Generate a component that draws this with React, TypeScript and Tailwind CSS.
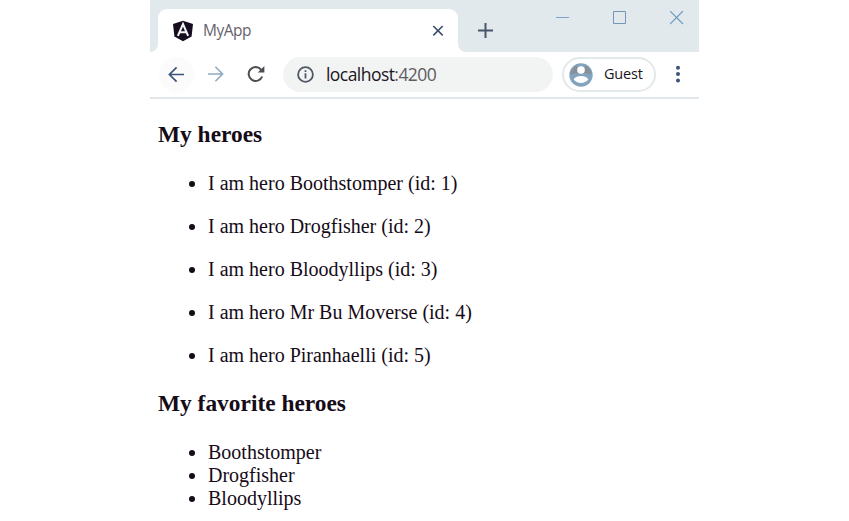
const heroes = ['Boothstomper', 'Drogfisher', 'Bloodyllips', 'Mr Bu Moverse', 'Piranhaelli'];
const favorites = ['Boothstomper', 'Drogfisher', 'Bloodyllips'];

function TabStrip() {
  return (
    <div className="flex h-[52px] items-end bg-[#e2e9ed]">
      <div className="h-2 w-2 bg-white">
        <div className="h-2 w-2 rounded-br-lg bg-[#e2e9ed]" />
      </div>
      <div className="flex h-[43px] w-[300px] items-center rounded-t-[9px] bg-white pr-[14px] pl-[14px]">
        <svg className="size-[22px]" viewBox="0 0 22 22">
          <path d="M11 .7 21 4 19.6 16.6 11 21.3 2.4 16.6 1 4Z" fill="#170d20" />
          <path d="M5.9 15.8 11 4 16.1 15.8M8.2 12.2H13.8" fill="none" stroke="#f4f6f6" strokeWidth="2" />
        </svg>
        <span className="ml-[9px] pb-px text-[15.5px] leading-5 tracking-[-0.5px] text-[#66636b]">MyApp</span>
        <svg className="ml-auto size-3" viewBox="0 0 12 12" fill="none" stroke="#3c4f6b" strokeWidth="1.6">
          <path d="M1.3 1 10.7 10.4M10.7 1 1.3 10.4" />
        </svg>
      </div>
      <div className="h-2 w-2 bg-white">
        <div className="h-2 w-2 rounded-bl-lg bg-[#e2e9ed]" />
      </div>
      <svg className="mb-[14px] ml-[11px] size-4" viewBox="0 0 16 16" fill="none" stroke="#48566b" strokeWidth="2">
        <path d="M8.5 1V16M1 8.5H16" />
      </svg>
      <div className="mr-[15px] mb-[27px] ml-auto flex gap-[43px]">
        <svg className="size-[14px]" viewBox="0 0 14 14" stroke="#7da4c8"><path d="M0 6.5H13" /></svg>
        <svg className="size-[14px]" viewBox="0 0 14 14" fill="none" stroke="#7396b8"><path d="M.5.5H12.5V12.5H.5Z" /></svg>
        <svg className="size-[14px]" viewBox="0 0 14 14" stroke="#6d98c0" strokeWidth="1.2"><path d="M0 0 13 13M13 0 0 13" /></svg>
      </div>
    </div>
  );
}

function Toolbar() {
  return (
    <div className="flex h-[47px] items-start border-b-2 border-[#e0e6e9] pt-[5px]">
      <div className="ml-[9px] flex size-[35px] shrink-0 items-center justify-center rounded-full bg-[#fbfbfb]">
        <svg className="size-[18px]" viewBox="0 0 18 18" fill="none" stroke="#3a5577" strokeWidth="1.7">
          <path d="M16 8.5H1.5M8.6 1.3 1.4 8.5 8.6 15.7" />
        </svg>
      </div>
      <svg className="mt-2 ml-[13px] size-[18px] shrink-0" viewBox="0 0 18 18" fill="none" stroke="#8eabc0" strokeWidth="1.6">
        <path d="M1 9H15.5M8.4 1.8 15.6 9 8.4 16.2" />
      </svg>
      <svg className="mt-[7px] ml-[21px] size-5 shrink-0" viewBox="0 0 20 20" fill="none" stroke="#4f4b52" strokeWidth="2">
        <path d="M15.3 5.8A7 7 0 1 0 16.2 12.5" />
        <path d="M18.4 2V8.5H11.7Z" fill="#4f4b52" stroke="none" />
      </svg>
      <div className="ml-[17px] flex h-[35px] w-[270px] shrink-0 items-center rounded-full bg-[#f2f4f3] pl-[14px]">
        <svg className="size-[17px]" viewBox="0 0 17 17" fill="none" stroke="#4f5866" strokeWidth="1.8">
          <circle cx="8.5" cy="8.5" r="7.4" />
          <path d="M8.5 7.3V12.5M8.5 4.3V6" />
        </svg>
        <span className="ml-3 pb-0.5 text-[17.5px] leading-6 tracking-[-0.55px] text-[#5d5b60]"><span className="text-[#1c1524]">localhost</span>:4200</span>
      </div>
      <div className="ml-[9px] flex h-[35px] w-[94px] shrink-0 items-center rounded-full border-2 border-[#e2e9eb] pl-[5px]">
        <svg className="size-6 shrink-0" viewBox="0 0 24 24">
          <circle cx="12" cy="12" r="11.7" fill="#83a4bd" />
          <path d="M1.5 12C2 7.5 4.5 4 8 2.5V8C9 11 15 11 16 8V2.5C19.5 4 22 7.5 22.5 12C17 9 7 9 1.5 12Z" fill="#8a8e95" />
          <circle cx="12" cy="7" r="3.8" fill="#fff" />
          <path d="M4.7 16.5C5.5 14.2 8.5 13 12 13S18.5 14.2 19.3 16.5C17.5 18.8 15 20 12 20S6.5 18.8 4.7 16.5Z" fill="#fff" />
        </svg>
        <span className="ml-[11px] pb-0.5 text-[14.5px] leading-5 tracking-[-0.2px] text-[#1c1524]">Guest</span>
      </div>
      <svg className="mt-[7px] ml-[19px] h-5 w-[6px] shrink-0" viewBox="0 0 6 20" fill="#3d5378">
        <circle cx="3" cy="3.8" r="2" /><circle cx="3" cy="10" r="2" /><circle cx="3" cy="16.5" r="2" />
      </svg>
    </div>
  );
}

export default function App() {
  return (
    <div className="h-[521px] w-[849px] overflow-hidden bg-white pl-[150px]">
      <div className="w-[549px] font-['Open_Sans',sans-serif]">
        <TabStrip />
        <Toolbar />
        <main className="pt-[22px] pl-2 font-['Liberation_Serif',serif] text-[20px] leading-[23px] text-[#160b18]">
          <h3 className="text-[23.4px] leading-[27px] font-bold">My heroes</h3>
          <ul className="mt-6 flex list-disc flex-col gap-5 pl-[50px]">
            {heroes.map((name, i) => (
              <li key={name}>I am hero {name} (id: {i + 1})</li>
            ))}
          </ul>
          <h3 className="mt-[23px] text-[23.4px] leading-[27px] font-bold">My favorite heroes</h3>
          <ul className="mt-6 list-disc pl-[50px]">
            {favorites.map((name) => <li key={name}>{name}</li>)}
          </ul>
        </main>
      </div>
    </div>
  );
}
